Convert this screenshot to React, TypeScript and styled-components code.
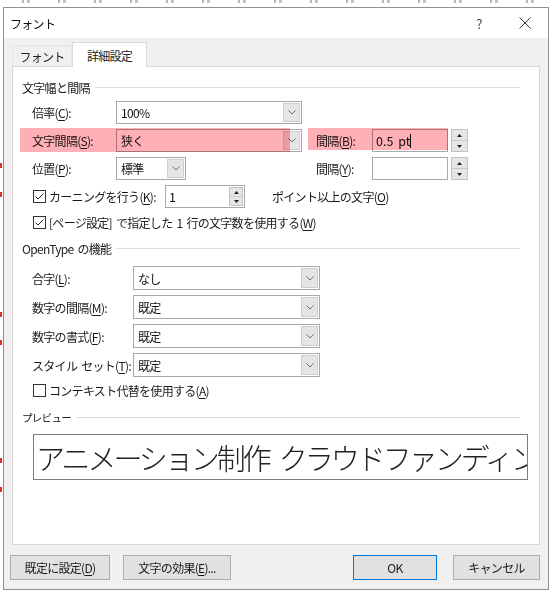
import styled, { createGlobalStyle } from 'styled-components';

const GlobalStyle = createGlobalStyle`
  html, body {
    margin: 0;
    padding: 0;
    background: #fff;
  }
  body {
    font-family: 'Noto Sans CJK JP', 'Noto Sans', sans-serif;
    font-size: 12px;
    letter-spacing: -0.7px;
    word-spacing: 2px;
    color: #1a1a1a;
  }
  u {
    text-decoration-thickness: 1px;
    text-underline-offset: 2px;
  }
`;

const Screen = styled.div`
  width: 552px;
  height: 594px;
  overflow: hidden;
  background: #fff;
  display: flex;
  flex-direction: column;
`;

const Ruler = styled.div`
  height: 7px;
  flex: none;
  background:
    repeating-linear-gradient(90deg, transparent 0 14px, #b4b4b4 14px 16px, transparent 16px 19px, #c4c4c4 19px 22px, transparent 22px 36px)
    0 0 / 100% 3px no-repeat;
  background-position: 8px 0;
`;

const Desk = styled.div`
  flex: 1;
  display: flex;
`;

const PageEdge = styled.div`
  width: 3px;
  flex: none;
  background:
    linear-gradient(#d33 0 0) 0 156px / 2px 5px no-repeat,
    linear-gradient(#d33 0 0) 0 185px / 2px 5px no-repeat,
    linear-gradient(#d33 0 0) 0 305px / 2px 5px no-repeat,
    linear-gradient(#d33 0 0) 0 333px / 2px 5px no-repeat,
    linear-gradient(#d33 0 0) 0 451px / 2px 5px no-repeat,
    linear-gradient(#d33 0 0) 0 480px / 2px 5px no-repeat;
`;

const Dialog = styled.div`
  width: 546px;
  height: 583px;
  box-sizing: border-box;
  border: 1px solid #8f8f8f;
  background: #f0f0f0;
  display: flex;
  flex-direction: column;
`;

const TitleBar = styled.div`
  height: 30px;
  background: #fff;
  display: flex;
  align-items: center;
  padding-left: 6px;
`;

const TitleText = styled.span`
  flex: 1;
  font-size: 12px;
  color: #111;
`;

const TitleButton = styled.span`
  width: 46px;
  height: 30px;
  display: flex;
  align-items: center;
  justify-content: center;
  font-size: 13px;
  color: #444;
`;

const Body = styled.div`
  flex: 1;
  display: flex;
  flex-direction: column;
  padding: 4px 8px 0 8px;
`;

const TabStrip = styled.div`
  height: 24px;
  display: flex;
  align-items: flex-end;
`;

const Tab = styled.div<{ $active?: boolean }>`
  box-sizing: border-box;
  height: ${(p) => (p.$active ? '25px' : '21px')};
  width: ${(p) => (p.$active ? '75px' : '60px')};
  display: flex;
  align-items: center;
  justify-content: center;
  background: ${(p) => (p.$active ? '#fff' : '#f0f0f0')};
  border: 1px solid ${(p) => (p.$active ? '#d9d9d9' : '#e4e4e4')};
  border-bottom: none;
  margin-bottom: ${(p) => (p.$active ? '-1px' : '0')};
  position: relative;
  z-index: ${(p) => (p.$active ? 1 : 0)};
  font-size: 12px;
  color: #222;
`;

const Panel = styled.div`
  height: 479px;
  box-sizing: border-box;
  background: #fff;
  border: 1px solid #d9d9d9;
  padding-top: 12px;
  display: flex;
  flex-direction: column;
`;

const SectionHeader = styled.div<{ $small?: boolean; $top?: number }>`
  display: flex;
  align-items: center;
  height: 16px;
  margin-top: ${(p) => p.$top ?? 0}px;
  padding-left: 9px;
  margin-right: 19px;
  font-size: ${(p) => (p.$small ? '10.5px' : '12px')};
  color: #222;
  &::after {
    content: '';
    flex: 1;
    height: 1px;
    margin-left: 5px;
    background: #dcdcdc;
  }
`;

const SpacingGrid = styled.div`
  position: relative;
  margin-top: 6px;
  padding-left: 19px;
  display: grid;
  grid-template-columns: 84px 186px 14px 56px auto;
  grid-auto-rows: 23px;
  row-gap: 5px;
  align-items: center;
`;

const FeatureGrid = styled.div`
  margin-top: 10px;
  padding-left: 19px;
  display: grid;
  grid-template-columns: 101px 187px;
  grid-auto-rows: 24px;
  row-gap: 5px;
  align-items: center;
`;

const Label = styled.span<{ $col?: number }>`
  grid-column: ${(p) => p.$col ?? 1};
  white-space: nowrap;
  font-size: 12px;
  color: #1a1a1a;
`;

const Marker = styled.div`
  position: absolute;
  background: #ffb0b6;
  mix-blend-mode: multiply;
  pointer-events: none;
`;

const SelectBox = styled.div<{ $w: number; $h?: number }>`
  width: ${(p) => p.$w}px;
  height: ${(p) => p.$h ?? 23}px;
  box-sizing: border-box;
  border: 1px solid #a8a8a8;
  background: #fff;
  display: flex;
  align-items: stretch;
`;

const SelectValue = styled.span`
  flex: 1;
  display: flex;
  align-items: center;
  padding-left: 4px;
  font-size: 12px;
  color: #111;
`;

const DropButton = styled.span`
  width: 17px;
  margin: 1px;
  box-sizing: border-box;
  background: #e5e5e5;
  border: 1px solid #cfcfcf;
  display: flex;
  align-items: center;
  justify-content: center;
`;

const Cell = styled.div<{ $col: number }>`
  grid-column: ${(p) => p.$col};
  display: flex;
  align-items: center;
  gap: 3px;
`;

const TextBox = styled.div<{ $w: number }>`
  width: ${(p) => p.$w}px;
  height: 23px;
  box-sizing: border-box;
  border: 1px solid #a8a8a8;
  background: #fff;
  display: flex;
  align-items: stretch;
`;

const TextValue = styled.span`
  flex: 1;
  display: flex;
  align-items: center;
  padding-left: 3px;
  font-size: 12.5px;
  letter-spacing: 0;
  white-space: pre;
  color: #111;
`;

const Caret = styled.span`
  width: 1px;
  height: 14px;
  background: #000;
`;

const Spinner = styled.span<{ $inset?: boolean }>`
  width: ${(p) => (p.$inset ? '14px' : '17px')};
  height: ${(p) => (p.$inset ? '19px' : '23px')};
  margin: ${(p) => (p.$inset ? '1px' : '0')};
  box-sizing: border-box;
  background: #e6e6e6;
  border: 1px solid #c2c2c2;
  display: flex;
  flex-direction: column;
`;

const SpinHalf = styled.span<{ $bottom?: boolean }>`
  flex: 1;
  display: flex;
  align-items: center;
  justify-content: center;
  border-top: ${(p) => (p.$bottom ? '1px solid #c8c8c8' : 'none')};
`;

const CheckRow = styled.div<{ $top: number; $h?: number }>`
  display: flex;
  align-items: center;
  height: ${(p) => p.$h ?? 18}px;
  margin-top: ${(p) => p.$top}px;
  padding-left: 20px;
`;

const CheckBox = styled.span`
  width: 13px;
  height: 13px;
  box-sizing: border-box;
  border: 1px solid #333;
  background: #fff;
  display: flex;
  align-items: center;
  justify-content: center;
  flex: none;
`;

const CheckLabel = styled.span<{ $w?: number }>`
  margin-left: 3px;
  width: ${(p) => (p.$w ? `${p.$w}px` : 'auto')};
  white-space: nowrap;
  font-size: 12px;
  color: #1a1a1a;
`;

const Trailing = styled.span`
  margin-left: 27px;
  white-space: nowrap;
  font-size: 12px;
  color: #1a1a1a;
`;

const PreviewBox = styled.div`
  margin: 9px 0 0 20px;
  width: 495px;
  height: 46px;
  box-sizing: border-box;
  border: 1px solid #7d7d7d;
  overflow: hidden;
  white-space: nowrap;
  padding-left: 2px;
  font-size: 29px;
  font-weight: 300;
  letter-spacing: -3px;
  word-spacing: 0;
  line-height: 44px;
  color: #222;
`;

const WordGap = styled.span`
  display: inline-block;
  width: 10px;
`;

const Footer = styled.div`
  display: flex;
  align-items: center;
  margin-left: -2px;
  padding-top: 10px;
`;

const Spacer = styled.span`
  flex: 1;
`;

const PushButton = styled.button<{ $w: number; $default?: boolean; $gap?: number }>`
  width: ${(p) => p.$w}px;
  height: 25px;
  margin-left: ${(p) => p.$gap ?? 0}px;
  box-sizing: border-box;
  background: #e1e1e1;
  border: 1px solid ${(p) => (p.$default ? '#0078d7' : '#adadad')};
  font-family: inherit;
  font-size: 12px;
  letter-spacing: inherit;
  color: #1a1a1a;
  padding: 0;
  display: flex;
  align-items: center;
  justify-content: center;
`;

const Chevron = () => (
  <svg width="8" height="5" viewBox="0 0 8 5">
    <polyline points="0.5,0.5 4,4 7.5,0.5" fill="none" stroke="#707070" strokeWidth="1" />
  </svg>
);

const Check = () => (
  <svg width="11" height="11" viewBox="0 0 11 11">
    <polyline points="1.5,5.5 4,8 9.5,2.5" fill="none" stroke="#222" strokeWidth="1" />
  </svg>
);

const CloseIcon = () => (
  <svg width="12" height="12" viewBox="0 0 12 12">
    <path d="M0.5 0.5 L11.5 11.5 M11.5 0.5 L0.5 11.5" stroke="#333" strokeWidth="1" />
  </svg>
);

const Arrow = ({ down }: { down?: boolean }) => (
  <svg width="5" height="3" viewBox="0 0 5 3">
    <polygon points={down ? '0,0 5,0 2.5,3' : '0,3 5,3 2.5,0'} fill="#222" />
  </svg>
);

const Select = ({ value, w, h }: { value: string; w: number; h?: number }) => (
  <SelectBox $w={w} $h={h}>
    <SelectValue>{value}</SelectValue>
    <DropButton>
      <Chevron />
    </DropButton>
  </SelectBox>
);

const Spin = ({ inset }: { inset?: boolean }) => (
  <Spinner $inset={inset}>
    <SpinHalf>
      <Arrow />
    </SpinHalf>
    <SpinHalf $bottom>
      <Arrow down />
    </SpinHalf>
  </Spinner>
);

const App = () => {
  return (
    <>
      <GlobalStyle />
      <Screen>
        <Ruler />
        <Desk>
          <PageEdge />
          <Dialog>
            <TitleBar>
              <TitleText>フォント</TitleText>
              <TitleButton>?</TitleButton>
              <TitleButton>
                <CloseIcon />
              </TitleButton>
            </TitleBar>
            <Body>
              <TabStrip>
                <Tab>フォント</Tab>
                <Tab $active>詳細設定</Tab>
              </TabStrip>
              <Panel>
                <SectionHeader>文字幅と間隔</SectionHeader>
                <SpacingGrid>
                  <Label>
                    倍率(<u>C</u>):
                  </Label>
                  <Cell $col={2}>
                    <Select value="100%" w={186} />
                  </Cell>

                  <Label>
                    文字間隔(<u>S</u>):
                  </Label>
                  <Cell $col={2}>
                    <Select value="狭く" w={186} />
                  </Cell>
                  <Label $col={4}>
                    間隔(<u>B</u>):
                  </Label>
                  <Cell $col={5}>
                    <TextBox $w={76}>
                      <TextValue>
                        0.5 pt
                        <Caret />
                      </TextValue>
                    </TextBox>
                    <Spin />
                  </Cell>

                  <Label>
                    位置(<u>P</u>):
                  </Label>
                  <Cell $col={2}>
                    <Select value="標準" w={70} />
                  </Cell>
                  <Label $col={4}>
                    間隔(<u>Y</u>):
                  </Label>
                  <Cell $col={5}>
                    <TextBox $w={76}>
                      <TextValue />
                    </TextBox>
                    <Spin />
                  </Cell>

                  <Marker style={{ left: 7, top: 27, width: 270, height: 24 }} />
                  <Marker style={{ left: 295, top: 27, width: 140, height: 22 }} />
                </SpacingGrid>

                <CheckRow $top={5} $h={23}>
                  <CheckBox>
                    <Check />
                  </CheckBox>
                  <CheckLabel $w={116}>
                    カーニングを行う(<u>K</u>):
                  </CheckLabel>
                  <TextBox $w={80}>
                    <TextValue>1</TextValue>
                    <Spin inset />
                  </TextBox>
                  <Trailing>
                    ポイント以上の文字(<u>O</u>)
                  </Trailing>
                </CheckRow>

                <CheckRow $top={5}>
                  <CheckBox>
                    <Check />
                  </CheckBox>
                  <CheckLabel>
                    [ページ設定] で指定した 1 行の文字数を使用する(<u>W</u>)
                  </CheckLabel>
                </CheckRow>

                <SectionHeader $top={9}>OpenType の機能</SectionHeader>
                <FeatureGrid>
                  <Label>
                    合字(<u>L</u>):
                  </Label>
                  <Select value="なし" w={187} h={24} />
                  <Label>
                    数字の間隔(<u>M</u>):
                  </Label>
                  <Select value="既定" w={187} h={24} />
                  <Label>
                    数字の書式(<u>F</u>):
                  </Label>
                  <Select value="既定" w={187} h={24} />
                  <Label>
                    スタイル セット(<u>T</u>):
                  </Label>
                  <Select value="既定" w={187} h={24} />
                </FeatureGrid>

                <CheckRow $top={5} $h={16}>
                  <CheckBox />
                  <CheckLabel>
                    コンテキスト代替を使用する(<u>A</u>)
                  </CheckLabel>
                </CheckRow>

                <SectionHeader $small $top={11}>
                  プレビュー
                </SectionHeader>
                <PreviewBox>
                  アニメーション制作
                  <WordGap />
                  クラウドファンディング
                </PreviewBox>
              </Panel>

              <Footer>
                <PushButton $w={100}>
                  既定に設定(<u>D</u>)
                </PushButton>
                <PushButton $w={108} $gap={13}>
                  文字の効果(<u>E</u>)...
                </PushButton>
                <Spacer />
                <PushButton $w={84} $default>
                  OK
                </PushButton>
                <PushButton $w={87} $gap={16}>
                  キャンセル
                </PushButton>
              </Footer>
            </Body>
          </Dialog>
        </Desk>
      </Screen>
    </>
  );
};

export default App;
